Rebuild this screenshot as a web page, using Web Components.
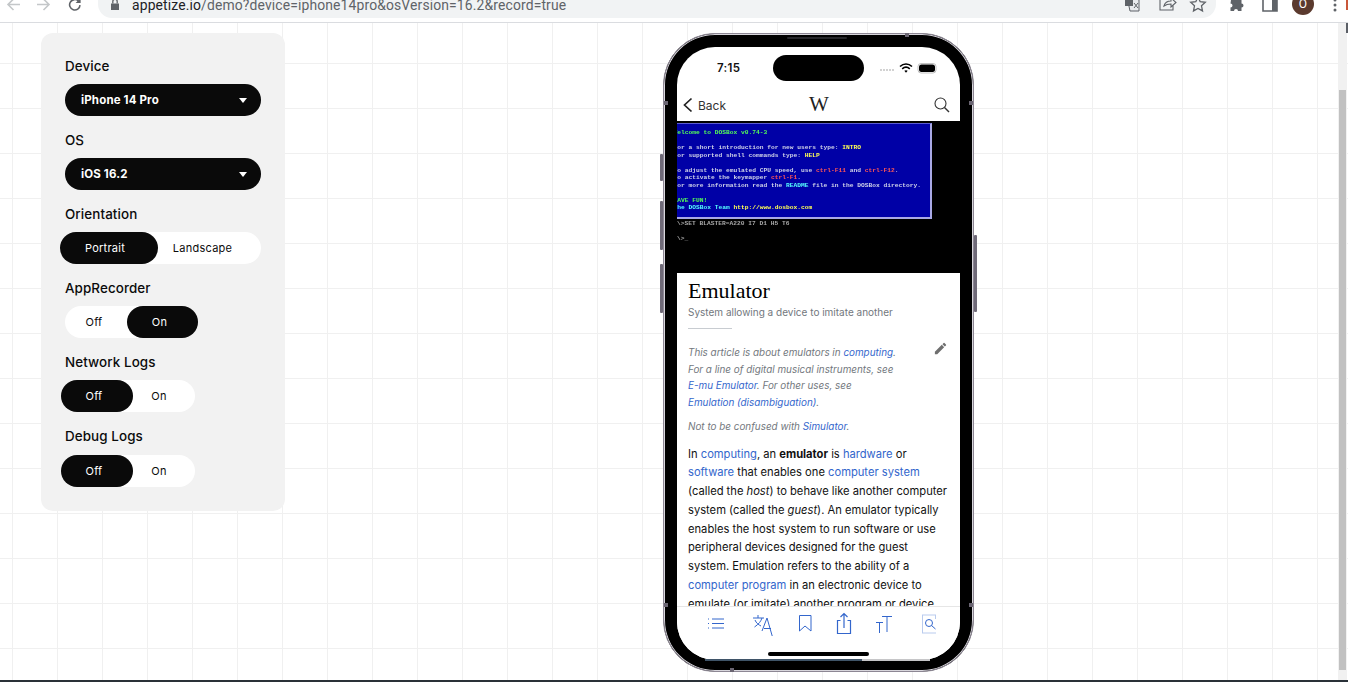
<!DOCTYPE html>
<html lang="en">
<head>
<meta charset="utf-8">
<title>Appetize demo</title>
<style>
    html, body { margin: 0; height: 682px; overflow: hidden; background: #fff; }
    body { font-family: "Inter", "Liberation Sans", sans-serif; }
</style>
</head>
<body>
<demo-page>
    <browser-bar slot="bar"></browser-bar>
    <config-panel slot="panel">
        <config-field label="Device"><pill-select value="iPhone 14 Pro"></pill-select></config-field>
        <config-field label="OS"><pill-select value="iOS 16.2"></pill-select></config-field>
        <config-field label="Orientation"><pill-toggle left="Portrait" right="Landscape" active="left" widths="98,103" inset="-5,0" shift="4,7"></pill-toggle></config-field>
        <config-field label="AppRecorder"><pill-toggle left="Off" right="On" active="right" widths="62,71" inset="0,-1" shift="2,3"></pill-toggle></config-field>
        <config-field label="Network Logs"><pill-toggle left="Off" right="On" active="left" widths="72,62" inset="-4,0" shift="3,5"></pill-toggle></config-field>
        <config-field label="Debug Logs" gap="11"><pill-toggle left="Off" right="On" active="left" widths="72,62" inset="-4,0" shift="3,5"></pill-toggle></config-field>
    </config-panel>
    <phone-frame slot="phone">
        <status-strip></status-strip>
        <wiki-nav></wiki-nav>
        <dos-shot></dos-shot>
        <wiki-article></wiki-article>
        <wiki-toolbar></wiki-toolbar>
    </phone-frame>
</demo-page>

<script>
const pageTemplate = document.createElement("template");
pageTemplate.innerHTML = `
    <style>
        :host { display: flex; flex-direction: column; width: 1348px; height: 682px; overflow: hidden; }
        main {
            flex: 1; display: flex; min-height: 0; position: relative;
            background-color: #fff;
            background-image: linear-gradient(#f0f0f0 1px, transparent 1px), linear-gradient(90deg, #f0f0f0 1px, transparent 1px);
            background-size: 45px 45px;
            background-position: 12px 40px;
        }
        .stage { flex: 1; display: flex; align-items: flex-start; padding: 10px 0 0 41px; }
        .gap { width: 378px; flex: none; }
        .scroll { width: 7px; padding: 0 1px 0 1px; background: #f1f1f1; flex: none; margin-right: 1px; box-sizing: content-box; }
        .scroll div { height: 580px; margin-top: 67px; background: #c1c1c1; }
        .sliver { position: absolute; right: 0; top: 0; width: 2px; height: 10px; background: #5b5f66; }
        footer { height: 2px; background: #2a3138; flex: none; }
    </style>
    <slot name="bar"></slot>
    <main>
        <div class="stage">
            <slot name="panel"></slot>
            <div class="gap"></div>
            <slot name="phone"></slot>
        </div>
        <div class="scroll"><div></div></div>
        <i class="sliver"></i>
    </main>
    <footer></footer>
`;

class DemoPage extends HTMLElement {
    constructor() {
        super();
        this.attachShadow({ mode: "open" });
        this.shadowRoot.appendChild(pageTemplate.content.cloneNode(true));
    }
}

const barTemplate = document.createElement("template");
barTemplate.innerHTML = `
    <style>
        :host { display: flex; align-items: flex-start; height: 22px; background: #fff; border-bottom: 1px solid #dadce0; flex: none; overflow: hidden; font-family: "Roboto", "Liberation Sans", sans-serif; position: relative; }
        svg { display: block; flex: none; }
        .nav { display: flex; width: 98px; height: 18px; }
        .pill { width: 1118px; height: 18px; background: #f1f3f4; border-radius: 0 0 14px 14px; display: flex; flex: none; font-size: 13.9px; line-height: 11px; color: #5f6368; }
        .url { white-space: nowrap; letter-spacing: 0.01em; }
        .url b { font-weight: 400; color: #202124; }
        .tools { display: flex; }
        .avatar { width: 22px; height: 22px; margin: -7px 0 0 0; border-radius: 50%; background: #5b3a2e; color: #fff; font-size: 12px; line-height: 22px; text-align: center; flex: none; }
        .tab { position: absolute; right: 0; top: 0; width: 2px; height: 10px; background: #c9573a; }
    </style>
    <div class="nav">
        <svg width="98" height="18" viewBox="0 0 98 18" fill="none">
            <path d="M20 4.5H9M13.5 -1 8 4.5 13.5 10" stroke="#c4c7c9" stroke-width="1.6"/>
            <path d="M37 4.5H48M43.5 -1 49 4.5 43.5 10" stroke="#c4c7c9" stroke-width="1.6"/>
            <path d="M80 3.6a5.2 5.2 0 1 1-1.5-4" stroke="#5f6368" stroke-width="1.6" transform="translate(0 1.5)"/>
            <path d="M80.6 -2v5h-5z" fill="#5f6368"/>
        </svg>
    </div>
    <div class="pill">
        <svg width="34" height="18" viewBox="0 0 34 18">
            <path d="M13 3.5h8v6.5h-8z" fill="#5f6368"/>
            <path d="M14.8 3.5V1.5a2.2 2.2 0 0 1 4.4 0v2" fill="none" stroke="#5f6368" stroke-width="1.3"/>
        </svg>
        <span class="url"><b>appetize.io</b>/demo?device=iphone14pro&amp;osVersion=16.2&amp;record=true</span>
        <div style="flex:1"></div>
        <svg width="92" height="18" viewBox="0 0 92 18" fill="none" style="margin-right:-1px">
            <path d="M2 -3h8l4 3v11H5z" fill="#e8eaed" stroke="#5f6368"/>
            <path d="M0 -3h8v9H0z" fill="#5f6368"/>
            <path d="M9 3l4 5M13 3l-4 5" stroke="#5f6368"/>
            <path d="M35 0v10h13V5M39 6c1-4 4-5 7-5V-2l5 4.5L46 7V4c-3 0-5 .5-7 2z" stroke="#5f6368" stroke-width="1.1"/>
            <path d="M73 -3l2.2 4.7 5.1.6-3.800 3.500 1 5.100L73 8.400l-4.500 2.500 1-5.100-3.800-3.500 5.100-.6z" stroke="#5f6368" stroke-width="1.300"/>
        </svg>
    </div>
    <div class="tools">
        <svg width="76" height="18" viewBox="0 0 76 18">
            <path d="M15 0h3a2 2 0 0 1 4 0h3.500v3.500a2 2 0 0 1 0 4V11H22a2 2 0 0 0-4 0h-3.500V7.500a2 2 0 0 0 0-4z" fill="#5f6368"/>
            <path d="M47 -2h14v13H47z" fill="#fff" stroke="#5f6368" stroke-width="1.600"/>
            <path d="M56 -2h5v13h-5z" fill="#5f6368"/>
        </svg>
        <div class="avatar">O</div>
        <svg width="36" height="18" viewBox="0 0 36 18">
            <circle cx="21" cy="0" r="1.500" fill="#5f6368"/><circle cx="21" cy="5" r="1.500" fill="#5f6368"/><circle cx="21" cy="10" r="1.500" fill="#5f6368"/>
        </svg>
    </div>
    <div class="tab"></div>
`;

class BrowserBar extends HTMLElement {
    constructor() {
        super();
        this.attachShadow({ mode: "open" });
        this.shadowRoot.appendChild(barTemplate.content.cloneNode(true));
    }
}

const panelTemplate = document.createElement("template");
panelTemplate.innerHTML = `
    <style>
        :host { display: flex; flex-direction: column; gap: 16px; width: 244px; height: 478px; box-sizing: border-box; padding: 25px 24px 0; background: #f2f2f2; border-radius: 12px; flex: none; color: #0b0b0b; }
    </style>
    <slot></slot>
`;

class ConfigPanel extends HTMLElement {
    constructor() {
        super();
        this.attachShadow({ mode: "open" });
        this.shadowRoot.appendChild(panelTemplate.content.cloneNode(true));
    }
}

class ConfigField extends HTMLElement {
    constructor() {
        super();
        this.attachShadow({ mode: "open" });
        const gap = this.getAttribute("gap") || 10;
        this.shadowRoot.innerHTML = `
            <style>
                :host { display: flex; flex-direction: column; gap: ${gap}px; }
                label { font: 500 13.4px/16px "Inter", "Liberation Sans", sans-serif; letter-spacing: 0.1px; }
            </style>
            <label>${this.getAttribute("label")}</label>
            <slot></slot>
        `;
    }
}

class PillSelect extends HTMLElement {
    constructor() {
        super();
        this.attachShadow({ mode: "open" });
        this.shadowRoot.innerHTML = `
            <style>
                :host { display: flex; align-items: center; justify-content: space-between; width: 196px; height: 32px; box-sizing: border-box; padding: 0 14px 0 16px; background: #0a0a0a; border-radius: 16px; color: #fff; font: 700 11.5px/32px "Inter", "Liberation Sans", sans-serif; letter-spacing: 0.15px; }
                i { width: 0; height: 0; border: 4px solid transparent; border-top: 5px solid #fff; border-bottom: 0; }
            </style>
            <span>${this.getAttribute("value")}</span><i></i>
        `;
    }
}

class PillToggle extends HTMLElement {
    constructor() {
        super();
        this.attachShadow({ mode: "open" });
        const [w1, w2] = this.getAttribute("widths").split(",");
        const [il, ir] = this.getAttribute("inset").split(",");
        const [s1, s2] = this.getAttribute("shift").split(",");
        const active = this.getAttribute("active");
        this.shadowRoot.innerHTML = `
            <style>
                :host { display: flex; width: max-content; height: 32px; background: #fff; border-radius: 16px; font: 400 11px/32px "Inter", "Liberation Sans", sans-serif; letter-spacing: 0.25px; color: #0b0b0b; }
                span { display: block; text-align: center; border-radius: 16px; box-sizing: border-box; }
                .on { background: #0a0a0a; color: #fff; }
                .a { width: ${w1}px; margin-left: ${il}px; padding-right: ${s1 * 2}px; }
                .b { width: ${w2}px; margin-right: ${ir}px; padding-right: ${s2 * 2}px; }
            </style>
            <span class="a ${active === "left" ? "on" : ""}">${this.getAttribute("left")}</span>
            <span class="b ${active === "right" ? "on" : ""}">${this.getAttribute("right")}</span>
        `;
    }
}

const phoneTemplate = document.createElement("template");
phoneTemplate.innerHTML = `
    <style>
        :host { display: block; position: relative; width: 311px; height: 639px; box-sizing: border-box; padding: 12px 13px 11px 12px; flex: none; background: #000; border: 1px solid #8d8794; box-shadow: inset 0 0 0 1px #d8d6dc; border-radius: 52px; }
        .screen { width: 283px; height: 613px; margin: 1px 0 0 1px; background: #fff; border-radius: 38px; overflow: hidden; display: flex; flex-direction: column; }
        .btn { position: absolute; width: 3px; background: #6f6a78; border-radius: 1px; }
        .tick { position: absolute; width: 4px; height: 4px; background: #6a6572; }
        .speaker { position: absolute; left: 123px; top: 3px; width: 60px; height: 2px; background: #26262a; border-radius: 1px; }
        .hbar { position: absolute; left: 41px; bottom: 10px; width: 157px; height: 2px; background: #3f5468; }
        .hbar2 { position: absolute; left: 198px; bottom: 10px; width: 68px; height: 2px; background: #c6c6c8; }
        .home { position: absolute; left: 104px; bottom: 15px; width: 101px; height: 4px; background: #000; border-radius: 2px; }
    </style>
    <i class="btn" style="left:-4px;top:120px;height:27px"></i>
    <i class="btn" style="left:-4px;top:167px;height:49px"></i>
    <i class="btn" style="left:-4px;top:230px;height:49px"></i>
    <i class="btn" style="right:-4px;top:201px;height:77px"></i>
    <i class="tick" style="left:0;top:67px"></i>
    <i class="tick" style="right:0;top:67px"></i>
    <i class="tick" style="left:0;top:569px"></i>
    <i class="tick" style="right:0;top:569px"></i>
    <i class="tick" style="left:241px;top:-1px"></i>
    <i class="tick" style="left:66px;bottom:-1px"></i>
    <i class="speaker"></i>
    <div class="screen"><slot></slot></div>
    <i class="hbar"></i><i class="hbar2"></i><i class="home"></i>
`;

class PhoneFrame extends HTMLElement {
    constructor() {
        super();
        this.attachShadow({ mode: "open" });
        this.shadowRoot.appendChild(phoneTemplate.content.cloneNode(true));
    }
}

const statusTemplate = document.createElement("template");
statusTemplate.innerHTML = `
    <style>
        :host { display: flex; align-items: center; height: 41px; flex: none; font: 600 11.5px "Inter", "Liberation Sans", sans-serif; color: #111; }
        .time { width: 96px; padding-left: 40px; box-sizing: border-box; letter-spacing: 0.3px; }
        .island { width: 91px; height: 26px; border-radius: 13px; background: #000; flex: none; margin-top: 1px; }
        svg { margin-left: 15px; display: block; flex: none; }
    </style>
    <div class="time">7:15</div>
    <div class="island"></div>
    <svg width="62" height="12" viewBox="0 0 62 12">
        <path d="M1 8h2M4 8h2M7 8h2M10 8h2M13 8h2" stroke="#c4c4c4" stroke-width="1.400"/>
        <path d="M21 4.500c3.500-3.400 8.500-3.400 12 0M23.200 6.800c2.300-2 5.300-2 7.600 0" fill="none" stroke="#000" stroke-width="1.600"/>
        <path d="M25.300 8.800 27 10.800l1.700-2c-1-.8-2.400-.8-3.400 0z" fill="#000"/>
        <rect x="40" y="2.500" width="16" height="7.500" rx="2.500" fill="#000"/>
        <rect x="39" y="1.500" width="18" height="9.500" rx="3" fill="none" stroke="#999" stroke-width=".6"/>
    </svg>
`;

class StatusStrip extends HTMLElement {
    constructor() {
        super();
        this.attachShadow({ mode: "open" });
        this.shadowRoot.appendChild(statusTemplate.content.cloneNode(true));
    }
}

const navTemplate = document.createElement("template");
navTemplate.innerHTML = `
    <style>
        :host { display: flex; align-items: center; height: 33px; flex: none; font: 400 12px "Inter", "Liberation Sans", sans-serif; color: #333; }
        svg { display: block; flex: none; }
        .back { margin-left: 5px; width: 16px; }
        .title { width: 111px; padding-top: 1px; }
        .w { width: 22px; font: 400 21px "Liberation Serif", serif; color: #222; }
        .search { margin-left: 102px; }
    </style>
    <svg class="back" width="16" height="16" viewBox="0 0 16 16" fill="none"><path d="M9.500 1.500 2.500 8l7 6.500" stroke="#222" stroke-width="1.700"/></svg>
    <span class="title">Back</span>
    <span class="w">W</span>
    <svg class="search" width="18" height="18" viewBox="0 0 18 18" fill="none"><circle cx="7.500" cy="7.500" r="5.500" stroke="#333" stroke-width="1.100"/><path d="M11.500 11.500 16 16" stroke="#333" stroke-width="1.400"/></svg>
`;

class WikiNav extends HTMLElement {
    constructor() {
        super();
        this.attachShadow({ mode: "open" });
        this.shadowRoot.appendChild(navTemplate.content.cloneNode(true));
    }
}

const dosTemplate = document.createElement("template");
dosTemplate.innerHTML = `
    <style>
        :host { display: block; height: 152px; flex: none; background: #000; overflow: hidden; font: 700 6.25px/7.5px "Liberation Mono", monospace; color: #cfd2e8; }
        .box { width: 255px; height: 96px; margin-top: 2px; box-sizing: border-box; background: #0000a6; border-top: 1px solid #5a5ad0; border-right: 2px solid #a9a9e6; border-bottom: 2px solid #a9a9e6; padding-top: 5px; overflow: hidden; }
        .box div { margin-left: -3.500px; height: 7.500px; white-space: pre; filter: blur(0.3px); }
        .g { color: #55ff55; } .y { color: #ffff55; } .r { color: #ff5555; } .c { color: #55ffff; }
        .out { margin: 1px 0 0 -7.500px; color: #a8a8a8; height: 7.500px; white-space: pre; filter: blur(0.3px); }
        .out + .out { margin-top: 7px; }
    </style>
    <div class="box">
        <div class="g">Welcome to DOSBox v0.74-3</div>
        <div></div>
        <div>For a short introduction for new users type: <span class="y">INTRO</span></div>
        <div>For supported shell commands type: <span class="y">HELP</span></div>
        <div></div>
        <div>To adjust the emulated CPU speed, use <span class="r">ctrl-F11</span> and <span class="r">ctrl-F12</span>.</div>
        <div>To activate the keymapper <span class="r">ctrl-F1</span>.</div>
        <div>For more information read the <span class="c">README</span> file in the DOSBox directory.</div>
        <div></div>
        <div class="g">HAVE FUN!</div>
        <div class="c">The DOSBox Team <span class="y">http://www.dosbox.com</span></div>
    </div>
    <div class="out">Z:\\&gt;SET BLASTER=A220 I7 D1 H5 T6</div>
    <div class="out">Z:\\&gt;_</div>
`;

class DosShot extends HTMLElement {
    constructor() {
        super();
        this.attachShadow({ mode: "open" });
        this.shadowRoot.appendChild(dosTemplate.content.cloneNode(true));
    }
}

const articleTemplate = document.createElement("template");
articleTemplate.innerHTML = `
    <style>
        :host { display: block; flex: 1; min-height: 0; overflow: hidden; padding: 5px 0 0 11px; font-family: "Inter", "Liberation Sans", sans-serif; color: #111; position: relative; }
        h1 { margin: 0; font: 400 22px/25px "Liberation Serif", serif; color: #000; }
        .sub { font-size: 10px; line-height: 16px; color: #72777d; margin-top: 1px; }
        hr { width: 44px; height: 1px; border: 0; margin: 8px 0 0; background: #c8ccd1; }
        .note { font-size: 9.900px; line-height: 16.700px; font-style: italic; color: #72777d; margin: 15px 0 0; white-space: nowrap; }
        .note + .note { margin-top: 7px; }
        a { color: #3366cc; text-decoration: none; }
        .body { font-size: 11.180px; line-height: 18.750px; margin: 10px 0 0; white-space: nowrap; }
        .pen { position: absolute; right: 12px; top: 68px; }
    </style>
    <h1>Emulator</h1>
    <div class="sub">System allowing a device to imitate another</div>
    <hr>
    <svg class="pen" width="15" height="15" viewBox="0 0 24 24"><path d="M3 17.250V21h3.750L17.810 9.940l-3.750-3.750zM20.710 7.040a1 1 0 0 0 0-1.410l-2.340-2.340a1 1 0 0 0-1.410 0l-1.830 1.830 3.750 3.750z" fill="#6f6f6f"/></svg>
    <p class="note">This article is about emulators in <a>computing</a>.<br>For a line of digital musical instruments, see<br><a>E-mu Emulator</a>. For other uses, see<br><a>Emulation (disambiguation)</a>.</p>
    <p class="note">Not to be confused with <a>Simulator</a>.</p>
    <p class="body">In <a>computing</a>, an <b>emulator</b> is <a>hardware</a> or<br><a>software</a> that enables one <a>computer system</a><br>(called the <i>host</i>) to behave like another computer<br>system (called the <i>guest</i>). An emulator typically<br>enables the host system to run software or use<br>peripheral devices designed for the guest<br>system. Emulation refers to the ability of a<br><a>computer program</a> in an electronic device to<br>emulate (or imitate) another program or device.</p>
`;

class WikiArticle extends HTMLElement {
    constructor() {
        super();
        this.attachShadow({ mode: "open" });
        this.shadowRoot.appendChild(articleTemplate.content.cloneNode(true));
    }
}

const toolbarTemplate = document.createElement("template");
toolbarTemplate.innerHTML = `
    <style>
        :host { display: grid; grid-template-columns: 48px 42px 39px 40px 44px 24px; justify-content: start; align-items: start; height: 54px; box-sizing: border-box; padding: 5px 0 0 26px; flex: none; background: #fff; border-top: 1px solid #e6e6e6; }
        svg { display: block; }
    </style>
    <svg width="24" height="24" viewBox="0 0 24 24" fill="none" stroke="#3366cc"><path d="M9 7h12M9 11.500h12M9 16h12"/><path d="M5 7h2M5 11.500h2M5 16h2" stroke-dasharray="1 1"/></svg>
    <svg width="24" height="24" viewBox="0 0 24 24" fill="none" stroke="#3366cc"><path d="M2 6h11M7 3v3M3.500 15C8 12 10 9 11 6M4 8c1 3 4 5 6 6M11 19l5-13 5.500 19M13 16.500h7"/></svg>
    <svg width="24" height="24" viewBox="0 0 24 24" fill="none" stroke="#3366cc"><path d="M6.500 3.500h11.500v15.500l-6-5-5.500 5z"/></svg>
    <svg width="24" height="24" viewBox="0 0 24 24" fill="none" stroke="#3366cc" stroke-width="1.200"><path d="M8.500 8.500H5.500v13h13v-13h-3M12 16V2M8.500 5 12 1.500 15.500 5"/></svg>
    <svg width="24" height="24" viewBox="0 0 24 24" fill="none" stroke="#3366cc"><path d="M4 10.500h7M7.500 10.500V21M10 4.500h10M15 4.500V20"/></svg>
    <svg width="24" height="24" viewBox="0 0 24 24" fill="none" stroke="#3366cc"><path d="M6 3h14M6 21h14M6.500 3v18M19.500 3v4" stroke="#b9cbee"/><circle cx="13" cy="11" r="3.500"/><path d="m15.500 13.500 4 3.500"/></svg>
`;

class WikiToolbar extends HTMLElement {
    constructor() {
        super();
        this.attachShadow({ mode: "open" });
        this.shadowRoot.appendChild(toolbarTemplate.content.cloneNode(true));
    }
}

customElements.define("demo-page", DemoPage);
customElements.define("browser-bar", BrowserBar);
customElements.define("config-panel", ConfigPanel);
customElements.define("config-field", ConfigField);
customElements.define("pill-select", PillSelect);
customElements.define("pill-toggle", PillToggle);
customElements.define("phone-frame", PhoneFrame);
customElements.define("status-strip", StatusStrip);
customElements.define("wiki-nav", WikiNav);
customElements.define("dos-shot", DosShot);
customElements.define("wiki-article", WikiArticle);
customElements.define("wiki-toolbar", WikiToolbar);
</script>
</body>
</html>
